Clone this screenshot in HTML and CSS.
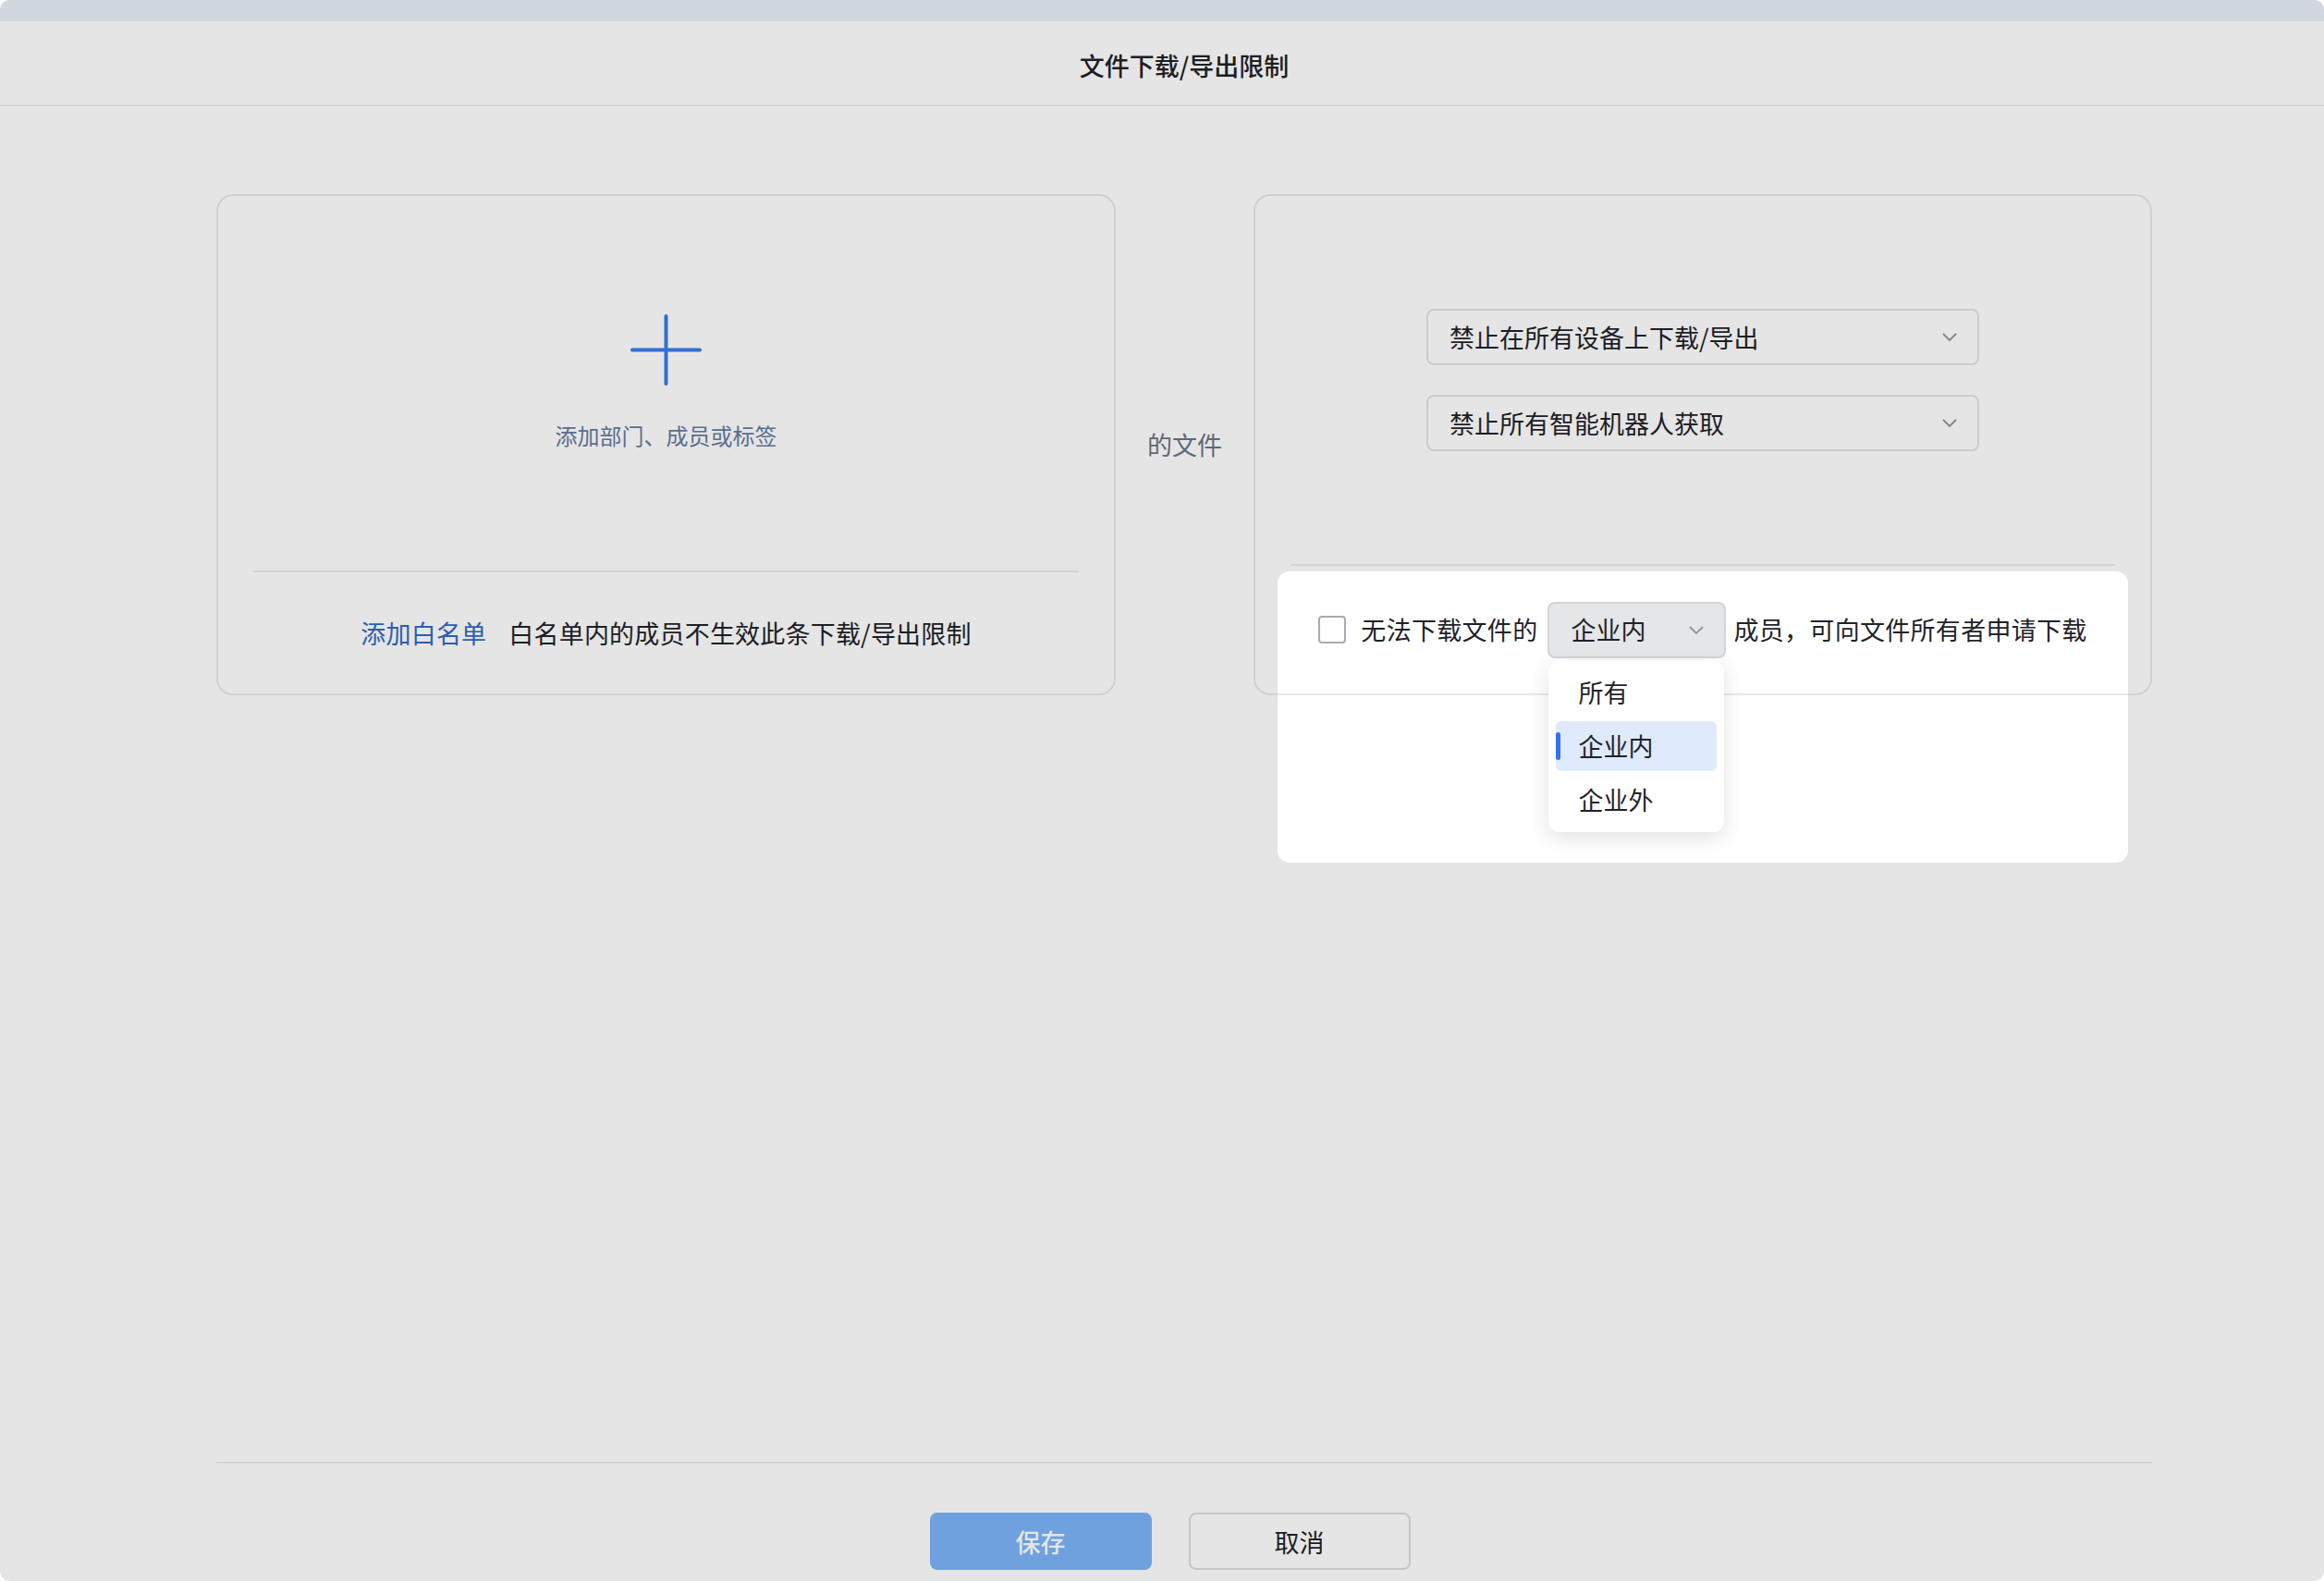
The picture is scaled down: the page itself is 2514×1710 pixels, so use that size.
FILE: index.html
```html
<!DOCTYPE html>
<html lang="zh-CN">
<head>
<meta charset="utf-8">
<title>文件下载/导出限制</title>
<link rel="stylesheet" href="styles.css">
</head>
<body>
<div class="window">
  <div class="topbar"></div>
  <header class="header"><h1 class="title">文件下载/导出限制</h1></header>
  <main class="main">
    <div class="rule-grid">
      <section class="card">
        <div class="left-top">
          <svg class="plus" viewBox="0 0 77 77" aria-hidden="true"><path d="M38.5 2v73M2 38.5h73" fill="none" stroke="#357cf0" stroke-width="4" stroke-linecap="round"/></svg>
          <div class="add-label">添加部门、成员或标签</div>
        </div>
        <div class="card-divider"></div>
        <div class="left-bottom">
          <span class="link">添加白名单</span><span class="note">白名单内的成员不生效此条下载/导出限制</span>
        </div>
      </section>
      <div class="mid-label">的文件</div>
      <section class="card">
        <div class="right-top">
          <div class="select wide"><span>禁止在所有设备上下载/导出</span><svg class="chev" viewBox="0 0 16 9" aria-hidden="true"><path d="M1 1l7 7 7-7" fill="none" stroke="#8f959e" stroke-width="1.8"/></svg></div>
          <div class="select wide"><span>禁止所有智能机器人获取</span><svg class="chev" viewBox="0 0 16 9" aria-hidden="true"><path d="M1 1l7 7 7-7" fill="none" stroke="#8f959e" stroke-width="1.8"/></svg></div>
        </div>
        <div class="card-divider"></div>
        <div class="right-bottom">
          <div class="apply-row">
            <span class="checkbox"></span>
            <span class="row-text">无法下载文件的</span>
            <div class="select-wrap">
              <div class="select small"><span>企业内</span><svg class="chev" viewBox="0 0 16 9" aria-hidden="true"><path d="M1 1l7 7 7-7" fill="none" stroke="#8f959e" stroke-width="1.8"/></svg></div>
              <div class="menu">
                <div class="menu-item">所有</div>
                <div class="menu-item active">企业内</div>
                <div class="menu-item">企业外</div>
              </div>
            </div>
            <span class="row-text after">成员，可向文件所有者申请下载</span>
          </div>
        </div>
      </section>
    </div>
  </main>
  <footer class="footer">
    <button class="btn btn-primary">保存</button>
    <button class="btn btn-default">取消</button>
  </footer>
  <div class="spotlight"></div>
</div>
</body>
</html>
```

FILE: styles.css
```css
html, body {
  margin: 0;
  padding: 0;
  background: #ffffff;
}

.window {
  width: 2514px;
  height: 1710px;
  position: relative;
  overflow: hidden;
  border-radius: 10px;
  background: #ffffff;
  display: flex;
  flex-direction: column;
  font-family: "Noto Sans CJK SC", "Noto Sans", sans-serif;
  color: #1f2329;
}

.topbar {
  flex: none;
  height: 23px;
  background: #e9f0fa;
}

.header {
  flex: none;
  box-sizing: border-box;
  height: 92px;
  padding: 4px 186px 0 234px;
  border-bottom: 2px solid #ececec;
  display: flex;
  align-items: center;
  justify-content: center;
}

.title {
  margin: 0;
  font-size: 27px;
  font-weight: 500;
  line-height: 1;
  color: #1f2329;
}

.main {
  flex: 1;
  padding: 95px 186px 0 234px;
}

.rule-grid {
  display: grid;
  grid-template-columns: 973px 1fr 972px;
  height: 542px;
}

.card {
  box-sizing: border-box;
  border: 2px solid #e8e8e8;
  border-radius: 18px;
  display: flex;
  flex-direction: column;
}

.card-divider {
  flex: none;
  height: 2px;
  margin: 0 38px;
  background: #ececec;
}

.left-top {
  flex: none;
  height: 405px;
  display: flex;
  flex-direction: column;
  align-items: center;
  justify-content: center;
}

.plus {
  display: block;
  width: 77px;
  height: 77px;
}

.add-label {
  margin-top: 36px;
  font-size: 24px;
  line-height: 36px;
  color: #647ca0;
}

.left-bottom {
  flex: 1;
  display: flex;
  align-items: center;
  justify-content: center;
  font-size: 27px;
  line-height: 36px;
  letter-spacing: 0.2px;
}

.link {
  color: #3169c4;
  margin-right: 24px;
}

.note {
  color: #1f2329;
}

.mid-label {
  align-self: center;
  text-align: center;
  font-size: 27px;
  line-height: 36px;
  color: #6a7485;
}

.right-top {
  flex: none;
  height: 398px;
  display: flex;
  flex-direction: column;
  align-items: center;
  justify-content: center;
  gap: 32px;
}

.select {
  box-sizing: border-box;
  height: 61px;
  border: 2px solid #e3e4e6;
  border-radius: 8px;
  background: #ffffff;
  display: flex;
  align-items: center;
  justify-content: space-between;
  padding: 0 22px 0 23px;
  font-size: 27px;
  line-height: 36px;
  color: #1f2329;
}

.select.wide {
  width: 598px;
}

.select.small {
  width: 193px;
  background: #e5e6e8;
  border-color: #d2d4d8;
}

.chev {
  display: block;
  width: 16px;
  height: 9px;
  flex: none;
}

.right-bottom {
  flex: 1;
  display: flex;
  align-items: center;
  justify-content: center;
}

.apply-row {
  display: flex;
  align-items: center;
  font-size: 27px;
  line-height: 36px;
}

.checkbox {
  box-sizing: border-box;
  width: 30px;
  height: 30px;
  border: 2px solid #a7abb1;
  border-radius: 4px;
  background: #ffffff;
  margin-right: 16px;
}

.row-text {
  white-space: nowrap;
  letter-spacing: 0.3px;
}

.select-wrap {
  position: relative;
  margin-left: 11px;
}

.row-text.after {
  margin-left: 8px;
}

.menu {
  position: absolute;
  top: calc(100% + 2px);
  left: 1px;
  z-index: 10;
  box-sizing: border-box;
  width: 190px;
  padding: 8px;
  background: #ffffff;
  border-radius: 12px;
  box-shadow: 0 6px 22px rgba(0, 0, 0, 0.12);
  display: flex;
  flex-direction: column;
  gap: 4px;
}

.menu-item {
  position: relative;
  height: 54px;
  padding-left: 24px;
  display: flex;
  align-items: center;
  border-radius: 6px;
  font-size: 27px;
  color: #1f2329;
}

.menu-item.active {
  background: #dfeafd;
}

.menu-item.active::before {
  content: "";
  position: absolute;
  left: 0;
  top: 12px;
  width: 5px;
  height: 30px;
  border-radius: 3px;
  background: #3370ff;
}

.footer {
  flex: none;
  box-sizing: border-box;
  height: 129px;
  margin: 0 186px 0 234px;
  padding: 53px 31px 0 0;
  border-top: 2px solid #ececec;
  display: flex;
  justify-content: center;
  align-items: flex-start;
  gap: 40px;
}

.btn {
  box-sizing: border-box;
  width: 240px;
  height: 62px;
  border-radius: 8px;
  font-family: "Noto Sans CJK SC", "Noto Sans", sans-serif;
  font-size: 27px;
  line-height: 1;
  padding: 0;
}

.btn-primary {
  background: #7cb4f9;
  border: none;
  color: #ffffff;
  font-weight: 500;
}

.btn-default {
  background: #ffffff;
  border: 2px solid #dedede;
  color: #1f2329;
}

.spotlight {
  position: absolute;
  left: 1382px;
  top: 618px;
  width: 920px;
  height: 315px;
  border-radius: 13px;
  box-shadow: 0 0 0 3000px rgba(0, 0, 0, 0.1);
  pointer-events: none;
  z-index: 5;
}
```
